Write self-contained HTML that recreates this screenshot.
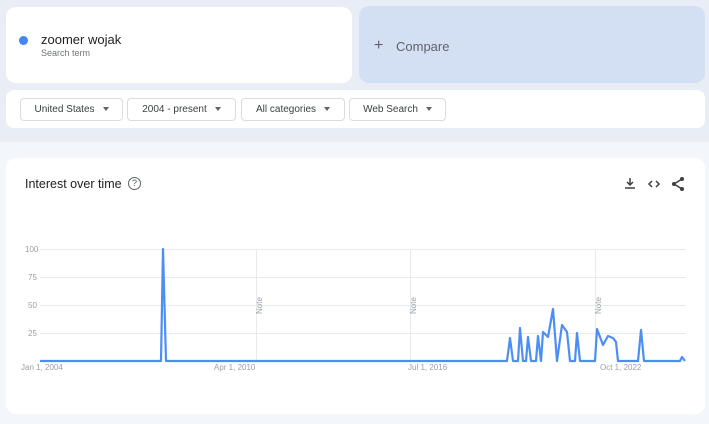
<!DOCTYPE html>
<html><head><meta charset="utf-8"><style>
*{box-sizing:border-box;margin:0;padding:0}
body{width:709px;height:424px;background:#e9eef6;font-family:"Liberation Sans",sans-serif;position:relative;overflow:hidden}
.card{position:absolute;background:#fff;border-radius:10px}
.chip{position:absolute;top:98px;height:23px;border:1px solid #dadce0;border-radius:4px;font-size:10px;color:#3c4043;line-height:21px;text-align:center}
.chip:after{content:"";display:inline-block;margin-left:8px;border-left:3.5px solid transparent;border-right:3.5px solid transparent;border-top:4px solid #5f6368;vertical-align:1px}
.ax{position:absolute;font-size:8px;color:#9aa0a6}
</style></head><body>
<div class="card" style="left:6px;top:7px;width:346px;height:76px"></div>
<div style="position:absolute;left:19px;top:36px;width:9px;height:9px;border-radius:50%;background:#4285f4"></div>
<div style="position:absolute;left:41px;top:32px;font-size:13px;color:#202124">zoomer wojak</div>
<div style="position:absolute;left:41px;top:48px;font-size:9px;color:#70757a">Search term</div>
<div style="position:absolute;left:359px;top:6px;width:346px;height:77px;background:#d3e0f4;border-radius:10px"></div>
<div style="position:absolute;left:374px;top:37px;font-size:16px;color:#5f6368;font-weight:300">+</div>
<div style="position:absolute;left:396px;top:39px;font-size:13px;color:#5f6368">Compare</div>
<div class="card" style="left:6px;top:90px;width:699px;height:38px;border-radius:8px"></div>
<div class="chip" style="left:20px;width:103px">United States</div>
<div class="chip" style="left:127px;width:109px">2004 - present</div>
<div class="chip" style="left:241px;width:104px">All categories</div>
<div class="chip" style="left:349px;width:97px">Web Search</div>
<div style="position:absolute;left:0;top:142px;width:709px;height:282px;background:#f3f6fb"></div>
<div class="card" style="left:6px;top:158px;width:699px;height:256px"></div>
<div style="position:absolute;left:25px;top:177px;font-size:12.5px;color:#202124">Interest over time</div>
<div style="position:absolute;left:128px;top:177px;width:13px;height:13px;border:1.2px solid #5f6368;border-radius:50%;font-size:9px;color:#5f6368;text-align:center;line-height:11px">?</div>
<svg style="position:absolute;left:0;top:0" width="709" height="424">
<g fill="none" stroke="#3c4043" stroke-width="1.5">
<path d="M630 178v7M627 182l3 3 3-3M625 188h10"/>
<path d="M652 181l-3 3 3 3M656 181l3 3-3 3"/>
<path d="M682 179l-8 5 8 5"/>
</g>
<g fill="#3c4043"><circle cx="682" cy="179" r="2"/><circle cx="674" cy="184" r="2"/><circle cx="682" cy="189" r="2"/></g>
<g stroke="#e8eaed" stroke-width="1">
<line x1="40" y1="249.5" x2="686" y2="249.5"/><line x1="40" y1="277.5" x2="686" y2="277.5"/>
<line x1="40" y1="305.5" x2="686" y2="305.5"/><line x1="40" y1="333.5" x2="686" y2="333.5"/>
<line x1="256.5" y1="249" x2="256.5" y2="361"/><line x1="410.5" y1="249" x2="410.5" y2="361"/><line x1="595.5" y1="249" x2="595.5" y2="361"/>
</g>
<g font-size="8" fill="#9aa0a6" font-family="Liberation Sans">
<text transform="translate(262,314) rotate(-90)">Note</text>
<text transform="translate(416,314) rotate(-90)">Note</text>
<text transform="translate(601,314) rotate(-90)">Note</text>
</g>
<polyline fill="none" stroke="#4d8ef5" stroke-width="2.2" stroke-linejoin="round" points="40,361 161,361 163,249 166,361 507,361 510,338 513,361 518,361 520,328 523,361 526,361 528,337 531,361 536,361 538,336 541,361 543,332 548,337 553,309 557,361 562,325 567,332 570,361 575,361 577,333 580,361 595,361 597,329 603,345 608,336 613,338 616,342 618,361 638,361 641,330 644,361 680,361 682,357 685,361"/>
</svg>
<div class="ax" style="left:25px;top:245px">100</div>
<div class="ax" style="left:28px;top:273px">75</div>
<div class="ax" style="left:28px;top:301px">50</div>
<div class="ax" style="left:28px;top:329px">25</div>
<div class="ax" style="left:21px;top:363px">Jan 1, 2004</div>
<div class="ax" style="left:214px;top:363px">Apr 1, 2010</div>
<div class="ax" style="left:408px;top:363px">Jul 1, 2016</div>
<div class="ax" style="left:600px;top:363px">Oct 1, 2022</div>
</body></html>
